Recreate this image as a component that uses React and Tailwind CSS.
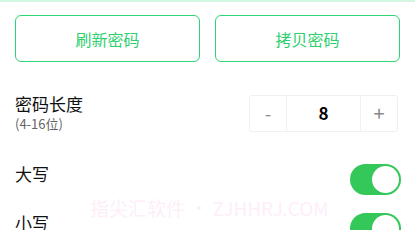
import React from "react";

function Toggle() {
  return (
    <div className="w-[51px] h-[31px] rounded-full bg-[#34c759] relative shrink-0">
      <div className="absolute right-[2px] top-[2px] w-[27px] h-[27px] rounded-full bg-white"></div>
    </div>
  );
}

export default function App() {
  return (
    <div
      className="relative w-[415px] h-[230px] overflow-hidden bg-white"
      style={{ fontFamily: '"Noto Sans CJK SC", "Noto Sans", sans-serif' }}
    >
      <div className="h-[2px] bg-[#d4f7e2]"></div>
      <div className="flex gap-[15px] px-[15px] pt-[13px]">
        <button className="flex-1 h-[47px] rounded-[6px] border border-[#2ed573] text-[#2ecf6e] text-[16px] flex items-center justify-center bg-white">
          刷新密码
        </button>
        <button className="flex-1 h-[47px] rounded-[6px] border border-[#2ed573] text-[#2ecf6e] text-[16px] flex items-center justify-center bg-white">
          拷贝密码
        </button>
      </div>
      <div className="flex items-center justify-between pl-[15px] pr-[17px] mt-[31px]">
        <div className="flex flex-col">
          <span className="text-[17px] leading-[22px] text-[#111]">密码长度</span>
          <span className="text-[13px] leading-[18px] text-[#666]">(4-16位)</span>
        </div>
        <div className="flex h-[37px] w-[149px] border border-[#f0f0f0] rounded-[3px]">
          <div className="w-[37px] flex items-center justify-center text-[#888] text-[18px] border-r border-[#f0f0f0]">-</div>
          <div className="flex-1 flex items-center justify-center text-[17px] font-semibold text-black">8</div>
          <div className="w-[37px] flex items-center justify-center text-[#888] text-[20px] border-l border-[#f0f0f0]">+</div>
        </div>
      </div>
      <div className="flex items-start justify-between pl-[15px] pr-[14px] mt-[31px]">
        <span className="text-[17px] leading-[20px] text-[#111]">大写</span>
        <Toggle />
      </div>
      <div className="flex items-start justify-between pl-[15px] pr-[14px] mt-[18px]">
        <span className="text-[17px] leading-[20px] text-[#111]">小写</span>
        <Toggle />
      </div>
      <div className="absolute left-[90px] top-[196px] text-[19px] leading-[24px] text-[#fdeefa] whitespace-nowrap pointer-events-none">
        指尖汇软件 • ZJHHRJ.COM
      </div>
    </div>
  );
}
